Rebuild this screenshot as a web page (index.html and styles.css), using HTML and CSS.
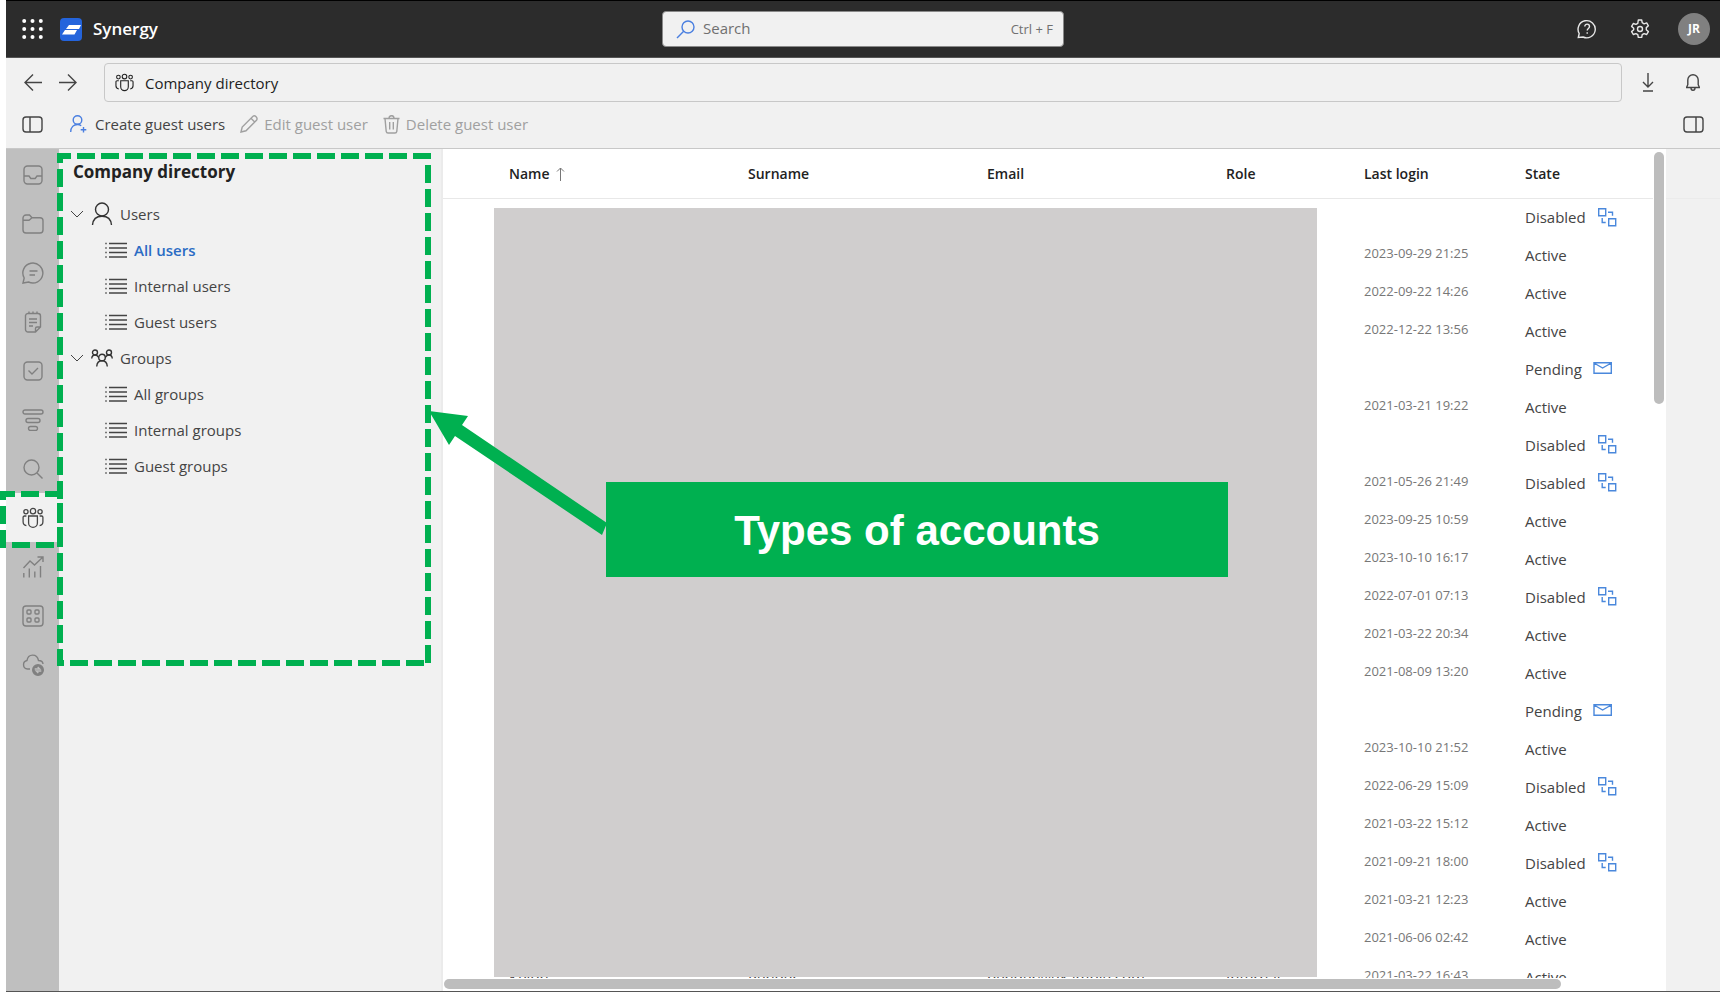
FILE: index.html
```html
<!DOCTYPE html>
<html lang="en">
<head>
<meta charset="utf-8">
<title>Synergy - Company directory</title>
<link rel="stylesheet" href="styles.css">
</head>
<body>
<svg class="defs" aria-hidden="true">
  <symbol id="people" viewBox="0 0 24 24"><circle cx="12" cy="4.500" r="2.900"/><circle cx="4.300" cy="5.200" r="2.300"/><circle cx="19.700" cy="5.200" r="2.300"/><path d="M7.200 9.800h9.600v7.700a4.800 4.800 0 0 1-9.600 0zM4.800 9.800H2.600a1.400 1.400 0 0 0-1.400 1.400v5a4 4 0 0 0 3.600 4M19.200 9.800h2.200a1.400 1.400 0 0 1 1.400 1.400v5a4 4 0 0 1-3.600 4"/></symbol>
  <symbol id="list" viewBox="0 0 24 16"><path d="M5 1.500h18M5 6h18M5 10.500h18M5 15h18" /><path d="M1 1.500h2M1 6h2M1 10.500h2M1 15h2" opacity=".7"/></symbol>
  <symbol id="chev" viewBox="0 0 14 8"><path d="M1 1l6 6 6-6"/></symbol>
  <symbol id="swap" viewBox="0 0 20 20"><path d="M1.700 1.700h7v7h-7zM11.700 11.700h7v7h-7zM11 5.200h4.500v3.500M5.200 11v4.500h3.500"/></symbol>
  <symbol id="mail" viewBox="0 0 20 12"><path d="M1 .7h17.300v10.600H1zM1 1l8.600 5L18.300 1"/></symbol>
</svg>
<div class="page">
  <header class="topbar">
    <div class="brand">
      <button class="icon-btn" aria-label="Apps"><svg class="waffle" width="21" height="20" viewBox="0 0 21 20"><g><circle cx="2.200" cy="2" r="2"/><circle cx="10.500" cy="2" r="2"/><circle cx="18.800" cy="2" r="2"/><circle cx="2.200" cy="10" r="2"/><circle cx="10.500" cy="10" r="2"/><circle cx="18.800" cy="10" r="2"/><circle cx="2.200" cy="18" r="2"/><circle cx="10.500" cy="18" r="2"/><circle cx="18.800" cy="18" r="2"/></g></svg></button>
      <svg class="logo" width="22" height="23" viewBox="0 0 22 23"><rect width="22" height="23" rx="4" fill="#2464dc"/><path d="M9 7h12l-2 4H6zM5 12h12l-2.500 4.500H2z" fill="#fff"/></svg>
      <span class="brand-name">Synergy</span>
    </div>
    <label class="search">
      <svg class="line blue" width="19" height="19" viewBox="0 0 19 19"><circle cx="12" cy="7" r="6"/><path d="M7.700 11.300L1 18"/></svg>
      <input type="search" placeholder="Search" aria-label="Search">
      <kbd>Ctrl + F</kbd>
    </label>
    <div class="account">
      <button class="icon-btn" aria-label="Help"><svg class="line" width="20" height="20" viewBox="0 0 20 20"><path d="M1.300 18.500l.9-4A8.600 8.600 0 1 1 6 18z"/><path d="M7.800 7.500c0-3.200 4.700-3 4.700 0 0 1.900-2.300 2-2.300 4M10.200 13.300v1.500"/></svg></button>
      <button class="icon-btn" aria-label="Settings"><svg class="line" width="20" height="20" viewBox="0 0 20 20"><circle cx="10" cy="10" r="2.500"/><path d="M8.300 1h3.400l.5 2.700 1.900 1.100 2.600-.9 1.700 2.900-2.100 1.800v2.200l2.100 1.800-1.700 2.900-2.600-.9-1.900 1.100-.5 2.700H8.300l-.5-2.700-1.900-1.100-2.600.9-1.700-2.900 2.100-1.800V9.200L1.600 7.400l1.700-2.900 2.600.9 1.900-1.100z" stroke-linejoin="round"/></svg></button>
      <button class="avatar">JR</button>
    </div>
  </header>

  <nav class="navbar">
    <div class="history">
      <button class="icon-btn" aria-label="Back"><svg class="line" width="18" height="17" viewBox="0 0 18 17"><path d="M18 8.500H1M9 .5l-8 8 8 8"/></svg></button>
      <button class="icon-btn" aria-label="Forward"><svg class="line" width="18" height="17" viewBox="0 0 18 17"><path d="M0 8.500h17M9 .5l8 8-8 8"/></svg></button>
    </div>
    <div class="address"><svg class="line" width="19" height="19"><use href="#people"/></svg><span>Company directory</span></div>
    <div class="nav-actions">
      <button class="icon-btn" aria-label="Download"><svg class="line" width="12" height="19" viewBox="0 0 12 19"><path d="M6 0v14M1 9l5 5 5-5M1 18h10"/></svg></button>
      <button class="icon-btn" aria-label="Notifications"><svg class="line" width="14" height="17" viewBox="0 0 14 17"><path d="M.5 13.500h13l-1.300-2.800V6a5.200 5.200 0 0 0-10.400 0v4.700zM5 14c0 3 4 3 4 0"/></svg></button>
    </div>
  </nav>

  <div class="toolbar">
    <button class="icon-btn toggle" aria-label="Toggle left panel"><svg class="line" width="21" height="17" viewBox="0 0 21 17"><rect x="1" y="1" width="19" height="15" rx="3"/><path d="M8 1v15"/></svg></button>
    <button class="tool"><svg class="line blue" width="17" height="18" viewBox="0 0 17 18"><circle cx="7.500" cy="5" r="4.300"/><path d="M.7 17c0-5 3-7.500 6.800-7.500 1.500 0 2.700.4 3.700 1.200M13.500 12v5.500M10.700 14.800h5.600"/></svg>Create guest users</button>
    <button class="tool" disabled><svg class="line" width="18" height="18" viewBox="0 0 18 18"><path d="M1 17l1.200-5L13 1.300c2-1.500 5 1.500 3.700 3.700L6 15.800zM11 3.300L14.700 7"/></svg>Edit guest user</button>
    <button class="tool" disabled><svg class="line" width="17" height="19" viewBox="0 0 17 19"><path d="M.5 3.500h16M2 3.500l1.200 12.800c.2 1.200.8 1.700 1.800 1.700h7c1 0 1.600-.5 1.800-1.700L15 3.500M6 3.300c0-3.500 5-3.500 5 0M6.700 7v7.500M10.300 7v7.500"/></svg>Delete guest user</button>
    <button class="icon-btn toggle-right" aria-label="Toggle right panel"><svg class="line" width="21" height="17" viewBox="0 0 21 17"><rect x="1" y="1" width="19" height="15" rx="3"/><path d="M13 1v15"/></svg></button>
  </div>

  <div class="workspace">
    <nav class="rail" aria-label="Modules">
      <a href="#inbox" aria-label="Inbox"><svg class="line" width="20" height="20" viewBox="0 0 20 20"><rect x="1" y="1" width="18" height="18" rx="3.500"/><path d="M1 11h5l1.800 2.500h4.400L14 11h5"/></svg></a>
      <a href="#files" aria-label="Files"><svg class="line" width="22" height="20" viewBox="0 0 22 20"><path d="M1 6V4a3 3 0 0 1 3-3h3.500L10 3.700h8a3 3 0 0 1 3 3V16a3 3 0 0 1-3 3H4a3 3 0 0 1-3-3zM1 6.300h6l3-2.600"/></svg></a>
      <a href="#chat" aria-label="Chat"><svg class="line" width="22" height="22" viewBox="0 0 22 22"><path d="M1 21l1.200-5A10 10 0 1 1 6.500 20zM7.500 9h8M7.500 13h5.500"/></svg></a>
      <a href="#notes" aria-label="Notes"><svg class="line" width="18" height="22" viewBox="0 0 18 22"><path d="M11.500 21H4a2.500 2.500 0 0 1-2.500-2.500v-14A2.500 2.500 0 0 1 4 2.500h10a2.500 2.500 0 0 1 2.500 2.500v11zM11.500 21v-3.500a1.500 1.500 0 0 1 1.500-1.500h3.500M5 .5v2M9 .5v2M13 .5v2M5 8h8M5 11.500h8M5 15h4"/></svg></a>
      <a href="#tasks" aria-label="Tasks"><svg class="line" width="20" height="20" viewBox="0 0 20 20"><rect x="1" y="1" width="18" height="18" rx="3.500"/><path d="M5.500 9.500l3.500 3.500 6-6"/></svg></a>
      <a href="#filters" aria-label="Filters"><svg class="line" width="22" height="22" viewBox="0 0 22 22"><rect x="1" y="1" width="20" height="4" rx="2"/><rect x="4" y="9.500" width="14" height="4" rx="2"/><rect x="6.500" y="17.500" width="9" height="4" rx="2"/></svg></a>
      <a href="#search" aria-label="Search"><svg class="line" width="20" height="20" viewBox="0 0 20 20"><circle cx="8.500" cy="8.500" r="7.500"/><path d="M14 14l5.500 5.500"/></svg></a>
      <a class="current" href="#directory" aria-label="Company directory"><svg class="line" width="22" height="22"><use href="#people"/></svg></a>
      <a href="#reports" aria-label="Reports"><svg class="line" width="22" height="22" viewBox="0 0 22 22"><path d="M1.800 21.500v-4.500M7.300 21.500v-9M12.800 21.500v-6M18.500 21.500V10M1.500 12L8 5l4.500 4L21 1M15.500 1H21v5"/></svg></a>
      <a href="#apps" aria-label="Apps"><svg class="line" width="22" height="22" viewBox="0 0 22 22"><rect x="1" y="1" width="20" height="20" rx="3"/><rect x="5" y="5" width="4" height="4" rx="1"/><rect x="13" y="5" width="4" height="4" rx="1"/><rect x="5" y="13" width="4" height="4" rx="1"/><rect x="13" y="13" width="4" height="4" rx="1"/></svg></a>
      <a href="#cloud" aria-label="Cloud sync"><svg class="line" width="22" height="22" viewBox="0 0 22 22"><path d="M8 15H5.500a4.300 4.300 0 0 1-.5-8.500C6 -.5 15-.8 16.500 6.500c2.500 0 4.300 1.500 4.500 3.500"/><circle cx="16" cy="16" r="5.300" fill="#808080"/><path stroke="#bfbfbf" d="M12.700 15h5l-2-2M19.300 17h-5l2 2"/></svg></a>
    </nav>

    <aside class="tree">
      <h1>Company directory</h1>
      <ul>
        <li><button class="branch"><svg class="line thin" width="14" height="8"><use href="#chev"/></svg><svg class="line dark" width="22" height="24" viewBox="0 0 22 24"><circle cx="11" cy="7.500" r="6.500"/><path d="M1.500 23c.5-6 4.500-8.800 9.500-8.800s9 2.800 9.500 8.800"/></svg>Users</button>
          <ul>
            <li><a class="selected" href="#all-users"><svg class="line" width="24" height="16"><use href="#list"/></svg>All users</a></li>
            <li><a href="#internal-users"><svg class="line" width="24" height="16"><use href="#list"/></svg>Internal users</a></li>
            <li><a href="#guest-users"><svg class="line" width="24" height="16"><use href="#list"/></svg>Guest users</a></li>
          </ul>
        </li>
        <li><button class="branch"><svg class="line thin" width="14" height="8"><use href="#chev"/></svg><svg class="line dark" width="22" height="18" viewBox="0 0 22 18"><circle cx="11" cy="8.500" r="3.300"/><circle cx="4" cy="3.500" r="2.500"/><circle cx="18" cy="3.500" r="2.500"/><path d="M5.700 17.500c.3-3.700 2.300-5.700 5.300-5.700s5 2 5.300 5.700M.7 9.500C1 7 2.300 6 4 6s2.800.8 3.700 2.500M21.300 9.500C21 7 19.700 6 18 6s-2.800.8-3.700 2.500"/></svg>Groups</button>
          <ul>
            <li><a href="#all-groups"><svg class="line" width="24" height="16"><use href="#list"/></svg>All groups</a></li>
            <li><a href="#internal-groups"><svg class="line" width="24" height="16"><use href="#list"/></svg>Internal groups</a></li>
            <li><a href="#guest-groups"><svg class="line" width="24" height="16"><use href="#list"/></svg>Guest groups</a></li>
          </ul>
        </li>
      </ul>
    </aside>

    <main class="content">
      <div class="table-view">
        <table>
          <colgroup><col class="c-name"><col class="c-text"><col class="c-text"><col class="c-role"><col class="c-date"><col></colgroup>
          <thead><tr><th>Name <svg class="line sort" width="9" height="14" viewBox="0 0 9 14"><path d="M4.500 14V1M1 4.500L4.500 1 8 4.500"/></svg></th><th>Surname</th><th>Email</th><th>Role</th><th>Last login</th><th>State</th></tr></thead>
          <tbody>
            <tr><td colspan="4"></td><td></td><td>Disabled<svg class="line swap" width="20" height="20"><use href="#swap"/></svg></td></tr>
            <tr><td colspan="4"></td><td><time>2023-09-29 21:25</time></td><td>Active</td></tr>
            <tr><td colspan="4"></td><td><time>2022-09-22 14:26</time></td><td>Active</td></tr>
            <tr><td colspan="4"></td><td><time>2022-12-22 13:56</time></td><td>Active</td></tr>
            <tr><td colspan="4"></td><td></td><td>Pending<svg class="line mail" width="20" height="12"><use href="#mail"/></svg></td></tr>
            <tr><td colspan="4"></td><td><time>2021-03-21 19:22</time></td><td>Active</td></tr>
            <tr><td colspan="4"></td><td></td><td>Disabled<svg class="line swap" width="20" height="20"><use href="#swap"/></svg></td></tr>
            <tr><td colspan="4"></td><td><time>2021-05-26 21:49</time></td><td>Disabled<svg class="line swap" width="20" height="20"><use href="#swap"/></svg></td></tr>
            <tr><td colspan="4"></td><td><time>2023-09-25 10:59</time></td><td>Active</td></tr>
            <tr><td colspan="4"></td><td><time>2023-10-10 16:17</time></td><td>Active</td></tr>
            <tr><td colspan="4"></td><td><time>2022-07-01 07:13</time></td><td>Disabled<svg class="line swap" width="20" height="20"><use href="#swap"/></svg></td></tr>
            <tr><td colspan="4"></td><td><time>2021-03-22 20:34</time></td><td>Active</td></tr>
            <tr><td colspan="4"></td><td><time>2021-08-09 13:20</time></td><td>Active</td></tr>
            <tr><td colspan="4"></td><td></td><td>Pending<svg class="line mail" width="20" height="12"><use href="#mail"/></svg></td></tr>
            <tr><td colspan="4"></td><td><time>2023-10-10 21:52</time></td><td>Active</td></tr>
            <tr><td colspan="4"></td><td><time>2022-06-29 15:09</time></td><td>Disabled<svg class="line swap" width="20" height="20"><use href="#swap"/></svg></td></tr>
            <tr><td colspan="4"></td><td><time>2021-03-22 15:12</time></td><td>Active</td></tr>
            <tr><td colspan="4"></td><td><time>2021-09-21 18:00</time></td><td>Disabled<svg class="line swap" width="20" height="20"><use href="#swap"/></svg></td></tr>
            <tr><td colspan="4"></td><td><time>2021-03-21 12:23</time></td><td>Active</td></tr>
            <tr><td colspan="4"></td><td><time>2021-06-06 02:42</time></td><td>Active</td></tr>
            <tr><td class="first">Keion</td><td>Pender</td><td>pender@example.com</td><td>Internal</td><td><time>2021-03-22 16:43</time></td><td>Active</td></tr>
          </tbody>
        </table>
        <div class="redaction"></div>
      </div>
      <div class="vscroll"><div class="thumb"></div></div>
      <div class="hscroll"><div class="thumb"></div></div>
    </main>
    <aside class="side"></aside>
  </div>
</div>

<svg class="annotation" width="640" height="680" viewBox="0 0 640 680" aria-hidden="true">
  <g fill="none" stroke="#00b050" stroke-width="6" stroke-dasharray="18 6">
    <path d="M60 163V156H428V663"/>
    <path d="M424 663H60V163"/>
    <path d="M3 500V494H60V545H3V500"/>
  </g>
  <path fill="#00b050" d="M429 411l39 5-6 9 145 98-5 12-147-99-6 9z"/>
</svg>
<div class="callout">Types of accounts</div>
</body>
</html>
```
FILE: styles.css
```css
* { box-sizing: border-box; }
body { margin: 0; background: #fff; color: #444; font: 15px/20px "Open Sans", "Noto Sans", sans-serif; }
button, input, kbd { font: inherit; color: inherit; }
button { border: 0; padding: 0; background: none; cursor: pointer; }
a { color: inherit; text-decoration: none; }
ul { list-style: none; margin: 0; padding: 0; }
svg { display: block; flex: none; }
.defs { position: absolute; width: 0; height: 0; }
.line { fill: none; stroke: currentColor; stroke-width: 1.4; }
.thin { stroke-width: 1; }
.blue { color: #4a7fe0; }

.page { display: flex; flex-direction: column; height: 100vh; margin-left: 6px; background: #f1f1f1; border-bottom: 1px solid #555; overflow: hidden; }

.topbar { display: grid; grid-template-columns: 1fr 402px 1fr; align-items: center; flex: none; height: 58px; background: #2c2c2c; border-top: 1px solid #000; border-bottom: 1px solid #555; color: #fff; }
.brand { display: flex; align-items: center; gap: 11px; padding-left: 16px; }
.waffle { fill: #fff; }
.logo { margin-left: 6px; }
.brand-name { font-size: 17px; font-weight: 600; }
.icon-btn { display: grid; place-items: center; }
.search { display: flex; align-items: center; gap: 8px; height: 36px; padding: 0 10px 0 13px; background: #f1f1f1; border: 1px solid #8a8a8a; border-radius: 4px; color: #707070; }
.search input { flex: 1; min-width: 0; border: 0; padding: 0 0 3px; background: none; outline: 0; }
.search input::placeholder { color: #707070; opacity: 1; }
.search kbd { font-size: 13px; }
.account { display: flex; align-items: center; justify-content: flex-end; gap: 33px; padding-right: 10px; color: #e8e8e8; }
.avatar { width: 32px; height: 32px; margin-left: -5px; border-radius: 50%; background: #808080; color: #fff; font-size: 12px; font-weight: 700; }

.navbar { display: flex; align-items: center; flex: none; height: 49px; padding: 0 20px 0 18px; color: #444; }
.history { display: flex; gap: 17px; width: 80px; }
.address { flex: 1; display: flex; align-items: center; gap: 11px; height: 39px; padding-left: 10px; border: 1px solid #c8c8c8; border-radius: 4px; color: #222; }
.address span { font-weight: 500; }
.nav-actions { display: flex; align-items: center; gap: 32px; padding-left: 20px; }

.toolbar { display: flex; align-items: center; flex: none; gap: 15px; height: 42px; padding: 0 16px 7px; border-bottom: 1px solid #c8c8c8; color: #444; }
.toggle { margin-right: 12px; }
.tool { display: flex; align-items: center; gap: 8px; }
.tool:disabled { color: #a0a0a0; }
.tool + .tool { gap: 6px; }
.toggle-right { margin-left: auto; }

.workspace { flex: 1; display: flex; min-height: 0; }
.rail { flex: none; width: 53px; padding-top: 1px; background: #bfbfbf; color: #808080; }
.rail a { display: grid; place-items: center; height: 49px; }
.rail .current { background: #f1f1f1; color: #444; }

.tree { flex: none; width: 384px; padding: 10px 12px; border-right: 2px solid #ebebeb; }
.tree h1 { margin: 0 0 11px 2px; font-size: 17px; line-height: 26px; font-weight: 700; color: #222; }
.branch, .tree a { display: flex; align-items: center; height: 36px; }
.branch { gap: 7px; padding-left: 0; }
.branch .thin { margin-left: -1px; }
.dark { color: #333; }
.tree a { gap: 6px; padding-left: 33px; }
.tree .selected { color: #2b6cc4; font-weight: 600; }
.tree .selected svg { color: #444; }

.content { position: relative; flex: 1; min-width: 0; display: grid; grid-template: minmax(0, 1fr) 13px / minmax(0, 1fr) 13px; background: #fff; }
.table-view { position: relative; overflow: hidden; }
table { width: 100%; table-layout: fixed; border-collapse: collapse; }
.c-name { width: 305px; }
.c-text { width: 239px; }
.c-role { width: 138px; }
.c-date { width: 161px; }
th { height: 49px; padding: 2px 0 0; border-bottom: 1px solid #e8e8e8; color: #222; text-align: left; font-weight: 600; font-size: 14px; }
th:first-child, .first { padding-left: 66px; }
.sort { display: inline-block; margin-left: 3px; color: #777; stroke-width: 1; vertical-align: -2px; }
td { height: 38px; padding: 0; white-space: nowrap; }
td svg { display: inline-block; color: #4a88dc; vertical-align: middle; }
.swap { margin: -5px 0 0 11px; }
.mail { margin: -5px 0 0 11px; }
time { display: block; padding-bottom: 5px; font-size: 13px; color: #777; }
.redaction { position: absolute; left: 51px; right: 336px; top: 59px; bottom: 1px; background: #d0cece; }
.vscroll { padding: 3px 1px; }
.vscroll .thumb { width: 10px; height: 252px; border-radius: 5px; background: #bdbdbd; }
.hscroll { grid-column: 1 / 3; padding: 1px 105px 2px 1px; }
.hscroll .thumb { height: 10px; border-radius: 5px; background: #bdbdbd; }
.side { flex: none; width: 54px; }
.side::before { content: ""; display: block; height: 49px; border-bottom: 1px solid #ebebeb; }

.annotation { position: absolute; left: 0; top: 0; pointer-events: none; }
.callout { position: absolute; left: 606px; top: 482px; width: 622px; height: 95px; display: grid; place-items: center; padding-top: 3px; background: #00b050; color: #fff; font: 700 42px/48px "Liberation Sans", Arial, sans-serif; }
```
